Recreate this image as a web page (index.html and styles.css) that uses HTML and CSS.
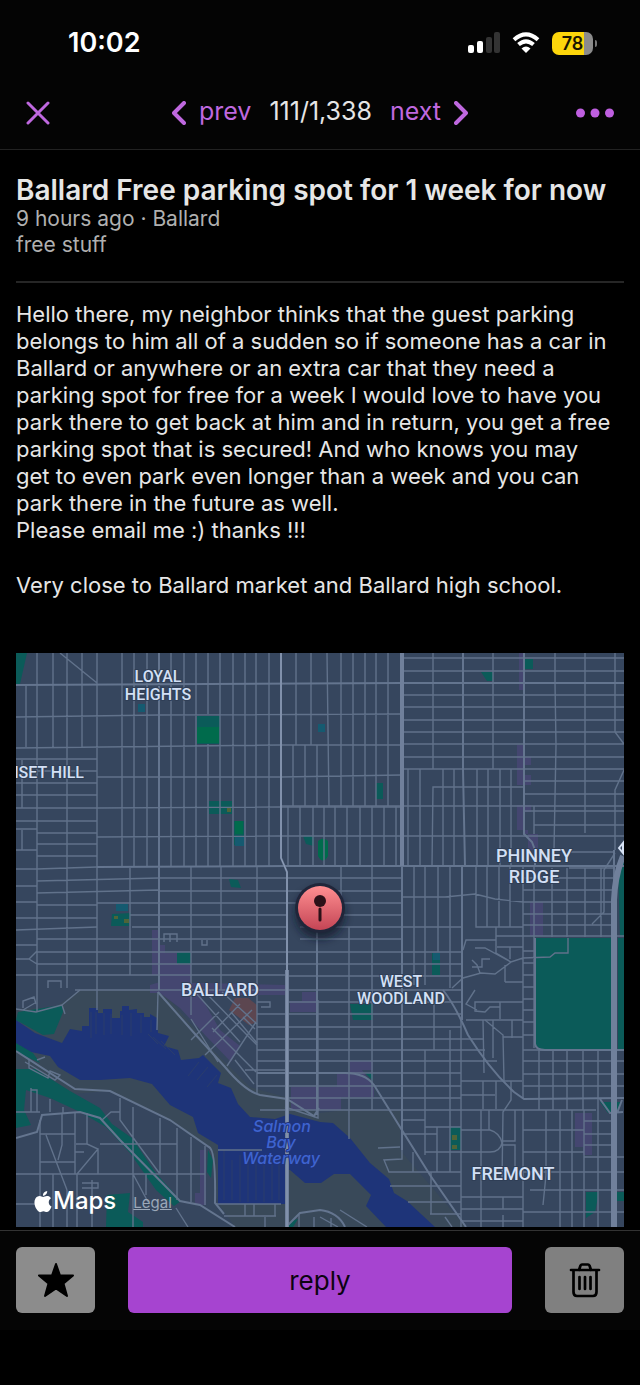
FILE: index.html
```html
<!DOCTYPE html>
<html lang="en">
<head>
<meta charset="utf-8">
<meta name="viewport" content="width=device-width, initial-scale=1">
<title>Ballard Free parking spot for 1 week for now</title>
<link rel="stylesheet" href="styles.css">
</head>
<body>
<div class="status">
  <time class="clock">10:02</time>
  <div class="indicators">
    <svg width="32" height="22" viewBox="0 0 32 22" aria-label="Signal">
      <rect x="0" y="13" width="6" height="8" rx="2" fill="#fff"/><rect x="9" y="9" width="6" height="12" rx="2" fill="#fff"/>
      <rect x="18" y="5" width="6" height="16" rx="2" fill="#333"/><rect x="26" y="0" width="6" height="21" rx="2" fill="#333"/>
    </svg>
    <svg width="28" height="22" viewBox="0 0 28 22" aria-label="Wi-Fi">
      <g fill="none" stroke="#fff" stroke-width="4"><path d="M2 7.700Q14-3 26 7.700"/><path d="M6.500 12.600Q14 6 21.500 12.600"/></g>
      <path d="M14 21L9.500 16.500Q14 12.700 18.500 16.500Z" fill="#fff"/>
    </svg>
    <div class="battery"><span class="level">78</span></div>
  </div>
</div>
<header class="nav">
  <button class="tool" aria-label="Close"><svg width="24" height="24" viewBox="0 0 24 24"><path d="M2 2L22 22M22 2L2 22"/></svg></button>
  <nav class="pager">
    <button class="tool"><svg width="14" height="24" viewBox="0 0 14 24"><path class="bold" d="M12 2L2 12L12 22"/></svg><span class="word">prev</span></button>
    <span class="word">111/1,338</span>
    <button class="tool"><span class="word">next</span><svg width="14" height="24" viewBox="0 0 14 24"><path class="bold" d="M2 2L12 12L2 22"/></svg></button>
  </nav>
  <button class="tool end" aria-label="More"><svg width="38" height="24" viewBox="0 0 38 24"><g fill="#bf5fe0"><circle cx="4.500" cy="12" r="4.500"/><circle cx="19" cy="12" r="4.500"/><circle cx="33.500" cy="12" r="4.500"/></g></svg></button>
</header>
<main class="post">
  <h1>Ballard Free parking spot for 1 week for now</h1>
  <div class="meta">9 hours ago · Ballard<br>free stuff</div>
  <hr>
  <div class="body">
    <p>Hello there, my neighbor thinks that the guest parking belongs to him all of a sudden so if someone has a car in Ballard or anywhere or an extra car that they need a parking spot for free for a week I would love to have you park there to get back at him and in return, you get a free parking spot that is secured! And who knows you may get to even park even longer than a week and you can park there in the future as well.<br>Please email me :) thanks !!!</p>
    <p>Very close to Ballard market and Ballard high school.</p>
  </div>
  <div class="map">
    <svg class="canvas" viewBox="16 653 608 574" aria-label="Map of Ballard">
      <defs>
        <linearGradient id="pin" x1="0" y1="0" x2="0" y2="1"><stop offset="0" stop-color="#ff8f91"/><stop offset="1" stop-color="#c44555"/></linearGradient>
        <filter id="shade" x="-50%" y="-50%" width="200%" height="200%"><feGaussianBlur stdDeviation="4"/></filter>
      </defs>
      <rect x="16" y="653" width="608" height="574" fill="#36465e"/>
      <path fill="#394959" d="M80 990H158L170 1000L215 1052L250 1087L285 1097L320 1113L345 1110H400V1150L466 1227H16V1009L55 1007Z"/>
      <path fill="#36465e" d="M16 1082L60 1095L110 1091L160 1115L210 1147L218 1203L235 1227H16Z"/>
      <g class="mall">
        <path d="M519 653H524V690H519ZM517 745H524V757H531V765H524V775H531V785H517V805H531V812H524V834H538V850H528V830H517ZM530 902H543V936H530Z"/>
        <path d="M152 930H158V945H165V953H178V965H191V983H205L285 985V995H200L220 1030L240 1046L231 1062L205 1035L180 1008L160 993H150V985L160 982V975H152Z"/>
        <path d="M302 992H316V1012H290V1001H302ZM350 1061H373V1070H362L374 1088V1097H341V1110H291V1087H337V1074H350ZM200 1150H206V1205H195V1193H200ZM575 1113H592V1155H583V1147H575Z"/>
      </g>
      <path fill="#5c4650" d="M235 998H248L257 1005V1022L249 1025L229 1010Z"/>
      <path fill="#1e3479" d="M16 1020L35 1033L62 1043L70 1029L82 1031V1026H89V1008H98V1013H103V1009H112V1018H120V1011H122V1006H129V1010L137 1009V1013H144V1017H150V1014L157 1018L158 1033L169 1036L164 1046L178 1050L181 1060L199 1058L203 1055L221 1073L218 1083L231 1088L238 1104L250 1117L275 1119L290 1114L320 1122L333 1123L350 1138L370 1163L389 1179L394 1193L407 1201L435 1227H386L366 1206L371 1195L350 1174H334L321 1183H305L290 1170H286V1204H218V1145L198 1133L193 1117L170 1105L152 1084L130 1078L100 1080L80 1080L58 1067L50 1056L31 1052L16 1046Z"/>
      <path class="pier" d="M91 1012V1038M96 1012V1034M104 1013V1035M111 1014V1034M122 1015V1035M131 1013V1036M141 1015V1033M151 1020V1032M158 1044L148 1034M166 1049L153 1037M175 1055L161 1041M199 1062L188 1076M208 1067L197 1080M217 1075L207 1087M224 1150V1200M232 1160V1200M240 1155V1202M248 1160V1202M256 1155V1200M264 1158V1202M272 1155V1200M279 1160V1200"/>
      <g class="park">
        <path d="M16 653H27L20 684H16ZM197 716H220V744H197ZM209 801H232V814H209ZM234 821H244V845H234ZM229 879L238 880L241 888L231 887ZM112 914L131 913L129 926H111ZM177 952H191V964H177ZM376 783H383V799H376ZM481 672H493V681L487 681ZM525 659H533V669H525ZM303 836H314V846L306 844ZM432 953H440V975H432ZM350 1004H373V1020H353ZM536 938H611V1049H540L535 1044ZM618 938H624V1049H618ZM618 865L624 860V937H620ZM365 1073H373V1081ZM450 1127H461V1150H450ZM600 1102H622L616 1113H608ZM586 1192H599L595 1212L586 1218ZM617 1192H624V1201H617Z"/>
        <path d="M18 1012L62 1005L63 1012L54 1034L43 1035L16 1020ZM16 1043L33 1053L40 1063L16 1052ZM16 1069L35 1069L70 1091L100 1108L112 1124L132 1138L155 1172L181 1201L174 1206L156 1190L130 1153L106 1127L80 1112L50 1098L26 1090L24 1110L31 1125L16 1128ZM107 1195L130 1193L128 1212L143 1222V1227H106ZM208 1150L213 1160L211 1178L207 1172ZM291 1221L298 1219L293 1227H287Z"/>
      </g>
      <g fill="#006b4c"><path d="M197 727H219V743H197ZM235 821H243V834H235ZM318 841Q323 836 328 841V856Q323 865 318 856Z"/></g>
      <path fill="#155a70" d="M318 724H325V732H318ZM138 704H145V712H138ZM116 904H128V911H116ZM433 953H440V960H433ZM235 836H244V846H235Z"/>
      <path fill="#4f6438" d="M114 916H118V919H114ZM124 919H129V923H124ZM227 808H231V812H227ZM452 1135H457V1140H452ZM452 1145H457V1149H452Z"/>
      <g class="roads">
        <path d="M37 653V747M53 653V747M67 653V747M82 653V747M97 653V1010M122 653V867M134 653V867M147 653V867M171 653V867M184 653V867M196 653V867M208 653V714M208 744V867M220 653V867M233 653V867M245 653V867M256 653V867M269 653V867M296 653V745M311 653V745M26 686V747M60 653L97 683M16 717L159 715L402 714M16 748L281 745L402 745M97 777H281L402 775M97 808L281 807H402M97 837L278 836H624M293 745V806M305 745V806M317 745V806M327 653L329 806M341 653V806M353 653V806M365 653V806M376 653V806M388 653V806"/>
        <path d="M16 759H97M37 771H97M16 783H97M16 795H97M16 808H97M16 821H97M16 829H37M37 833H97M37 844H97M16 850H37M37 856H97M22 760V808M22 830V850M37 747V1012M67 747V988M16 869H37M37 869L97 867M16 886H37M37 881L159 878M16 902H37M37 893L159 890M37 905H97M16 918H97M16 930L97 927M37 939H287M16 945H37M37 952H287M16 959H29L37 951M29 959L37 964H287M16 975H287M75 990H461M97 903H287M130 868V975M191 867V1015M221 867V990M257 867V1094M130 915H287M132 927H287M159 878H402M159 891H402M159 903H402M300 915H402M300 927H402M300 939H402M288 952H402M288 964H402M288 976H402"/>
        <path d="M288 806V866M300 806V866M313 806V866M324 806V866M335 806V866M347 806V866M360 806V866M372 806V866M384 806V866M396 806V866M281 806H624M404 658H624M404 671H624M404 695H624M404 707H624M404 720H624M404 732H624M404 744H624M404 757H624M404 769H624M524 781H624M524 794H624M524 811H624M534 825H624M433 653V769M493 653V769M555 653V683L556 745L554 850M585 653V833M615 653V732L624 744M615 850V790L624 770M408 769V866M420 769V866M432 866L433 787H523M443 769V866M454 769V866M477 769V866M488 769V866M500 769V866M511 769V866M534 806V834"/>
        <path d="M341 867V900M372 867V1110M349 927V1139M414 867V985M425 867V985M438 867V952M450 867V988M402 897H445L475 894L495 899L523 902M476 867V927H523M487 867V927M499 867V927M510 867V927M402 927H461M402 952H461M402 964H461M402 976H461M523 867V1098M534 867V1048M523 878H614M523 890H614M523 902H614M523 914H614M523 925H614M552 868V937M567 868V937M585 868V937M601 868V937M569 868H614M569 852H614M592 924L604 912V870L615 853M496 936H624M523 951H534M523 963H534M523 975H534M523 987H534M523 999H534M523 1010H534M523 1022H534M523 1035H534M463 950L466 940H496V927M496 936V953L511 962L495 974L481 973L463 978L452 988M475 948L485 948L511 962L523 958L550 957L555 953H568V938M472 960L477 965L480 973M472 967H482V959H490M505 965V982M505 982H523M497 947H523M510 947V959M466 1020H523V1002H500V1019M500 1007H490L485 1012L475 1011V1002H500M475 990L466 1004L477 1010"/>
        <path d="M287 1002H461M287 1014H461M287 1027H461M287 1039H461M287 1050H461M287 1061H461M345 1073H461M287 1086H461M287 1098H461M260 1110H523L596 1110M434 1002V1050M425 1050V1155M450 1030V1170M402 1120H425M402 1134H437M402 1150V1159L384 1160L389 1172H461M413 1152V1172M437 1127V1172M461 1127H425M450 1127V1172M425 1152H461M378 1148L400 1147M461 1039H483M461 1050H485M461 1061H497M461 1081H522M461 1095H495M483 1081V1109M496 1081V1109M485 1020L503 1035L504 1081M493 1020V1058M461 1020V1227M483 1020L484 1073M512 1020V1038M523 1050H624M539 1049V1110M553 1050V1110M567 1050V1110M583 1050V1110M598 1050V1110M523 1061H624M523 1074H624M523 1086H624M503 1037H523M511 1081V1100L503 1112L502 1180M461 1130H490Q500 1133 502 1143Q500 1152 490 1152H461M502 1141H515V1110M502 1145H515V1170M390 1186H461M408 1202H461M430 1214H461M431 1172V1214M481 1110V1227M489 1110V1130M523 1110V1227M546 1110V1175M546 1175L543 1205M560 1110V1227M572 1110V1227M584 1110V1227M598 1110V1227M523 1130H584M523 1152H584M584 1121H614M584 1134H614M584 1145H614M584 1157H624M523 1172H624M530 1190H624M523 1212H584M461 1197H523M461 1209H523M461 1221H523M584 1212H624M503 1197V1209M503 1215V1227"/>
        <path d="M195 992L240 1042M205 992L247 1035L257 1045M222 992L257 1024M191 1019L218 1062M219 1012L191 1040M240 1004L213 1032M252 1010L205 1055M256 1022L227 1066M231 1012L257 1043M243 1017L255 1029M212 1028L256 1072M235 1060L254 1084M245 1070L287 1070M257 1039H287M257 1050H287M257 1061H287M257 1086H287M257 1027H287M257 1014H287M257 1002H270V1007H261M318 1000V1118L285 1107M164 942V934H177V942M170 934V942M202 940V945H207V940M48 988V981H61V988M62 1005L80 990M62 1005L65 1014M23 1008V1001L34 997L36 1004M23 1010L35 1003M16 1009L36 1012L62 1005M158 992L157 1030"/>
        <path d="M37 1060L45 1057M25 1062L55 1080L60 1075L50 1071L48 1078L29 1068V1060M31 1088V1112M31 1112V1090H37V1112M50 1099V1112M63 1107V1113M16 1112H40M75 1113V1174M87 1113V1144L98 1149L77 1174V1200M46 1135L67 1190M62 1113V1145L58 1160M40 1134H75M40 1162H75M40 1120V1227M16 1174H205M75 1152H84M76 1144H87M98 1149V1174M82 1183H98V1188H82M16 1204H45M53 1174V1227M67 1190V1227M77 1200V1227M92 1180V1227M120 1098V1120L160 1174M120 1112H111L102 1120M133 1107V1227M133 1174L148 1202M146 1174V1195M160 1118V1174M177 1128V1200M191 1137V1202M205 1146V1205M100 1144H177M216 1204H281M224 1216H276M245 1204V1216M254 1204V1216M275 1204V1216M265 1217V1227M176 1208L188 1227M218 1150H262M320 1217L338 1227M340 1210L367 1227M331 1218V1227M445 1217L452 1227M314 1217V1227M299 1215V1227"/>
      </g>
      <g class="roads mid">
        <path d="M16 685L402 683H624M159 653V990M463 653V770L465 866M524 653V834L532 842L535 850V867M97 867L287 866H624M462 867V1020M402 866V1150M158 992L195 1034L225 1067Q245 1091 260 1095L287 1099L314 1116L319 1108M16 1051L75 1089L110 1091L170 1120L209 1147Q216 1150 215 1203L224 1214M16 1138L37 1132L42 1115L80 1112L100 1118L120 1140L180 1201L200 1205L235 1227M535 938V1044Q536 1050 545 1050H624M287 1073H345Q365 1073 374 1085L400 1127L430 1175L466 1227M443 990Q455 1005 468 1035Q490 1070 514 1092L524 1099L624 1098M257 1073H287M286 1227L300 1213L320 1210Q338 1212 345 1227M600 1099L610 1113L623 1112M617 1113L622 1100M317 930V1115M614 930V850"/>
      </g>
      <g fill="none" stroke="#70809b">
        <path stroke-width="2" d="M281 653V858L287 872V970"/><path stroke-width="4" d="M287 970V1227M402 653V866"/><path stroke-width="6" d="M623 856Q615 875 614 900V1227"/>
      </g>
      <path fill="none" stroke="#91a1bb" d="M281 653V858L287 872V970M287 970V1227"/>
      <path fill="none" stroke="#d6e2f5" stroke-width="2" d="M619 848L623 843L623 853Z"/>
      <g class="label">
        <text x="158" y="682">LOYAL</text><text x="158" y="700">HEIGHTS</text>
        <text x="84" y="778" text-anchor="end" class="edge">SUNSET HILL</text>
        <text class="large" x="534" y="862">PHINNEY</text><text class="large" x="534" y="883">RIDGE</text>
        <text class="large" x="220" y="996">BALLARD</text>
        <text x="401" y="987">WEST</text><text x="401" y="1004">WOODLAND</text>
        <text class="large" x="513" y="1180">FREMONT</text>
      </g>
      <g class="label water"><text x="282" y="1132">Salmon</text><text x="281" y="1148">Bay</text><text x="281" y="1164">Waterway</text></g>
      <circle cx="320" cy="914" r="25" fill="#101828" opacity=".7" filter="url(#shade)"/>
      <circle cx="320" cy="908" r="25" fill="#20263a"/><circle cx="320" cy="908" r="22" fill="url(#pin)"/>
      <circle cx="320" cy="901" r="6" fill="#2b1118"/><path d="M320 909V920" stroke="#2b1118" stroke-width="3" stroke-linecap="round"/>
    </svg>
    <div class="credit">
      <span class="brand"><svg width="18" height="21" viewBox="2 0 20 24"><path fill="#fff" d="M12.152 6.896c-.948 0-2.415-1.078-3.960-1.040-2.040.027-3.910 1.183-4.961 3.014-2.117 3.675-.546 9.103 1.519 12.090 1.013 1.454 2.208 3.090 3.792 3.039 1.520-.065 2.090-.987 3.935-.987 1.831 0 2.350.987 3.960.948 1.637-.026 2.676-1.480 3.676-2.948 1.156-1.688 1.636-3.325 1.662-3.415-.039-.013-3.182-1.221-3.220-4.857-.026-3.040 2.480-4.494 2.597-4.559-1.429-2.090-3.623-2.324-4.390-2.376-2-.156-3.675 1.090-4.610 1.090zM15.530 3.830c.843-1.012 1.400-2.427 1.245-3.830-1.207.052-2.662.805-3.532 1.818-.780.896-1.454 2.338-1.273 3.714 1.338.104 2.715-.688 3.559-1.701"/></svg>Maps</span>
      <a href="#legal">Legal</a>
    </div>
  </div>
</main>
<footer class="actions">
  <button class="square" aria-label="Favorite"><svg width="38" height="36" viewBox="0 0 38 36"><path d="M19 2L23 13.500H36L26.500 21.500L30 34L19 26.500L8 34L11.500 21.500L2 13.500H15Z" fill="#000" stroke="#000" stroke-width="2" stroke-linejoin="round"/></svg></button>
  <button class="reply">reply</button>
  <button class="square dim" aria-label="Delete"><svg width="32" height="36" viewBox="0 0 32 36"><g fill="none" stroke="#000" stroke-width="2.700" stroke-linecap="round"><path d="M2 8H30M10 8L11.500 3.500Q12 2.500 13 2.500H19Q20 2.500 20.500 3.500L22 8M4.500 8V30Q4.500 34 8 34H24Q27.500 34 27.500 30V8M10.500 15V27M16 15V27M21.500 15V27"/></g></svg></button>
</footer>
</body>
</html>
```
FILE: styles.css
```css
* { box-sizing: border-box; }
body { margin: 0; min-height: 100vh; background: #000; color: #e6e6e6; font-family: Inter, "Liberation Sans", sans-serif; }
button { margin: 0; padding: 0; border: 0; background: none; font: inherit; cursor: pointer; }
svg { display: block; }
.status { display: flex; align-items: center; justify-content: space-between; height: 76px; padding: 10px 47px 0 68px; background: #040404; }
.clock { color: #fff; font-size: 27px; font-weight: 600; line-height: 32px; }
.indicators { display: flex; align-items: center; gap: 12px; }
.battery { position: relative; width: 41px; height: 23px; border-radius: 7px; background: linear-gradient(90deg, #fdd60b 78%, #8b8b8b 78%); }
.battery::after { content: ""; position: absolute; right: -4px; top: 8px; width: 2px; height: 7px; border-radius: 0 2px 2px 0; background: #777; }
.level { display: block; color: #1a1500; font-size: 18px; font-weight: 600; line-height: 23px; text-align: center; }
.nav { display: grid; grid-template-columns: 1fr auto 1fr; align-items: center; height: 74px; padding: 0 26px; border-bottom: 1px solid #222; background: #040404; font-size: 25px; line-height: 32px; }
.tool { display: flex; align-items: center; gap: 13px; color: #bf68df; }
.tool path { fill: none; stroke: #bf68df; stroke-width: 3; stroke-linecap: round; stroke-linejoin: round; }
.tool .bold { stroke-width: 4; }
.pager { display: flex; align-items: center; gap: 18px; }
.word { padding-bottom: 4px; }
.end { justify-self: end; }
.post { padding: 24px 16px 3px; }
h1 { margin: 0; font-size: 28px; line-height: 32px; font-weight: 600; }
.meta { color: #b0b0b0; font-size: 21px; line-height: 26px; }
hr { height: 2px; margin: 23px 0 18px; border: 0; background: #262626; }
.body { padding-right: 12px; font-size: 22px; line-height: 27px; }
.body p { margin: 0 0 28px; }
.map { position: relative; margin-top: 54px; overflow: hidden; }
.canvas { width: 100%; height: auto; }
.mall { fill: #444670; }
.park { fill: #0b5b59; }
.pier { fill: none; stroke: #2a3d6d; }
.roads { fill: none; stroke: #61728b; stroke-width: 1.4; }
.mid { stroke: #64758f; stroke-width: 2; }
.label { font: 500 16px Roboto, sans-serif; fill: #d3e0f5; stroke: #2f3e56; stroke-width: 2px; paint-order: stroke; stroke-linejoin: round; text-anchor: middle; }
.label .large { font-size: 18px; }
.label .edge { text-anchor: end; }
.water { font: italic 500 16px Inter, sans-serif; fill: #3e64d0; stroke: #20337b; }
.credit { position: absolute; left: 18px; bottom: 10px; display: flex; align-items: center; gap: 17px; }
.brand { display: flex; align-items: center; gap: 1px; color: #fff; font-size: 24px; font-weight: 500; line-height: 32px; }
.credit a { padding-top: 3px; color: #9ba8b9; font-size: 15px; line-height: 20px; }
.actions { display: flex; gap: 33px; height: 100px; padding: 16px 16px 0; border-top: 1px solid #333; background: #050505; }
.square, .reply { height: 66px; border-radius: 6px; }
.square { display: grid; place-items: center; width: 79px; background: #8c8c8c; }
.dim { background: #808080; }
.reply { flex: 1; background: #a644d0; color: #0c0311; font-size: 26px; }
```
